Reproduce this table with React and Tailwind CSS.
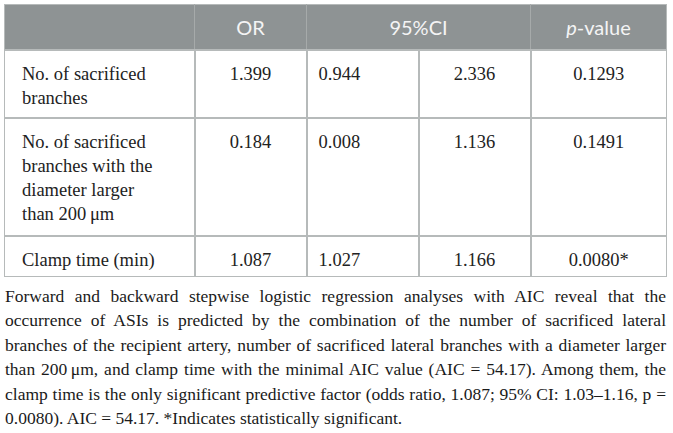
import React from 'react';

const ROWS = [
  { label: ['No. of sacrificed', 'branches'], or: '1.399', lo: '0.944', hi: '2.336', p: '0.1293', h: 'h-[68px]' },
  {
    label: ['No. of sacrificed', 'branches with the', 'diameter larger', 'than 200\u2009\u03bcm'],
    or: '0.184', lo: '0.008', hi: '1.136', p: '0.1491', h: 'h-[118px]',
  },
  { label: ['Clamp time (min)'], or: '1.087', lo: '1.027', hi: '1.166', p: '0.0080*', h: 'h-[41px]' },
];

const NOTE = [
  'Forward and backward stepwise logistic regression analyses with AIC reveal that the',
  'occurrence of ASIs is predicted by the combination of the number of sacrificed lateral',
  'branches of the recipient artery, number of sacrificed lateral branches with a diameter larger',
  'than 200\u2009\u03bcm, and clamp time with the minimal AIC value (AIC = 54.17). Among them, the',
  'clamp time is the only significant predictive factor (odds ratio, 1.087; 95% CI: 1.03\u20131.16, p =',
];

export default function App() {
  return (
    <div className="w-[673px] h-[433px] bg-white pt-1 pl-1 pr-2 font-['Liberation_Serif',serif] text-[#222]">
      <table className="w-[662px] table-fixed border-collapse border border-[#b6baba]">
        <colgroup>
          <col className="w-[190px]" />
          <col className="w-[112px]" />
          <col className="w-[112px]" />
          <col className="w-[112px]" />
          <col className="w-[136px]" />
        </colgroup>
        <thead>
          <tr className="h-[45px] bg-[#8e9394] text-[#f4f4f4] font-['Lato',sans-serif] text-[20px]">
            <th className="border-r border-[#a6aaaa]"></th>
            <th className="border-r border-[#a6aaaa] font-normal">OR</th>
            <th colSpan={2} className="border-r border-[#a6aaaa] font-normal">95%CI</th>
            <th className="font-normal"><i>p</i>-value</th>
          </tr>
        </thead>
        <tbody className="text-[18.5px] leading-[24px]">
          {ROWS.map((r, i) => (
            <tr key={i} className={`${r.h} border-t-2 border-[#b6baba] align-top`}>
              <td className="border-r-2 border-[#b6baba] pl-[17px] pt-[11px]">
                {r.label.map((l, j) => (
                  <div key={j}>{l}</div>
                ))}
              </td>
              <td className="border-r-2 border-[#b6baba] text-center pt-[11px]">{r.or}</td>
              <td className="border-r-2 border-[#b6baba] pl-[11px] pt-[11px]">{r.lo}</td>
              <td className="border-r-2 border-[#b6baba] text-center pt-[11px]">{r.hi}</td>
              <td className="text-center pt-[11px]">{r.p}</td>
            </tr>
          ))}
        </tbody>
      </table>
      <div className="mt-[7px] pl-[1px] w-[662px] text-[17.5px] leading-[24.4px] text-[#1a1a1a]">
        {NOTE.map((l, i) => (
          <div key={i} className="whitespace-nowrap text-justify [text-align-last:justify]">{l}</div>
        ))}
        <div>0.0080). AIC = 54.17. *Indicates statistically significant.</div>
      </div>
    </div>
  );
}
